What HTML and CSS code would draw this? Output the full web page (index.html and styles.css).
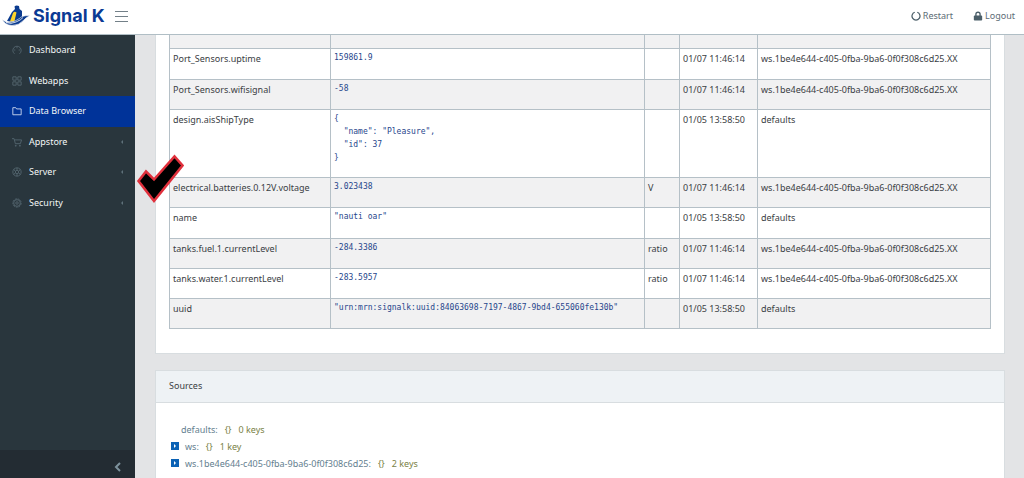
FILE: index.html
```html
<!DOCTYPE html>
<html lang="en">
<head>
<meta charset="utf-8">
<title>Signal K</title>
<link rel="stylesheet" href="styles.css">
</head>
<body>
<header class="topbar">
  <a class="brand" href="#">
    <svg class="brand-mark" viewBox="0 0 28 22" aria-hidden="true">
      <path d="M5 16 L10 7 L13 4 L12.500 1.500 Q14 0 17 1 L17.500 4 L20 6 L20 13 Q14 18 5 16Z" fill="#0b3b8f"/>
      <path d="M8 16.500 L11 8 Q12.500 6 14.500 7.500 L12.500 16Z" fill="#fdd32a"/>
      <path d="M0 14 Q5 19.500 13 16 Q18 13.500 20 11.500 Q23 10.500 28 10.500 Q24 12.500 22 15 Q17 20.500 10 20.500 Q3 20 0 14Z" fill="#0b3b8f" stroke="#fff" stroke-width="0.600"/>
      <path d="M4 17.500 Q9 19.500 14 17 Q19 15 21 12.500" fill="none" stroke="#fff" stroke-width="0.800"/>
    </svg>
    <span>Signal K</span>
  </a>
  <button class="menu-toggle" aria-label="Toggle menu"><i></i><i></i><i></i></button>
  <nav class="actions">
    <a href="#"><svg viewBox="0 0 12 12" aria-hidden="true"><path d="M4.500 1.500 A4.800 4.800 0 1 0 7.500 1.500" fill="none" stroke="currentColor" stroke-width="1.500"/></svg>Restart</a>
    <a href="#"><svg viewBox="0 0 12 12" aria-hidden="true"><path d="M3.500 6 V4 A2.500 2.500 0 0 1 8.500 4 V6" fill="none" stroke="currentColor" stroke-width="1.600"/><rect x="1" y="5.500" width="10" height="6" rx="1" fill="currentColor"/></svg>Logout</a>
  </nav>
</header>
<div class="shell">
  <aside class="sidebar">
    <nav class="menu">
      <a href="#"><svg viewBox="0 0 12 12"><path d="M3 10.500 A5 5 0 1 1 9 10.500 M6 2.500 V4 M2.500 6 H4 M8 6 H9.500"/></svg>Dashboard</a>
      <a href="#"><svg viewBox="0 0 12 12"><path d="M1 1h4v4H1z M7 1h4v4H7z M1 7h4v4H1z M7 7h4v4H7z"/></svg>Webapps</a>
      <a href="#" class="active"><svg viewBox="0 0 12 12"><path d="M1 2 H4.500 L5.500 3.500 H11 V10.500 H1Z"/></svg>Data Browser</a>
      <a href="#"><svg viewBox="0 0 12 12"><path d="M0 2 H2.500 L4 8 H10 L11.500 3.500 H3 M4 10h1v1H4z M9 10h1v1H9z"/></svg>Appstore<b class="chev"></b></a>
      <a href="#"><svg viewBox="0 0 12 12"><circle cx="6" cy="6" r="5"/><circle cx="6" cy="6" r="2"/><path d="M6 1V4M6 8V11M2 3L4 5M10 3L8 5M2 9L4 7M10 9L8 7"/></svg>Server<b class="chev"></b></a>
      <a href="#"><svg viewBox="0 0 12 12"><circle cx="6" cy="6" r="5" stroke-dasharray="2.400 1"/><circle cx="6" cy="6" r="4"/><circle cx="6" cy="6" r="1.500"/></svg>Security<b class="chev"></b></a>
    </nav>
    <button class="minimizer" aria-label="Collapse sidebar"><svg viewBox="0 0 8 10"><path d="M6 1 L2 5 L6 9"/></svg></button>
  </aside>
  <main class="content">
    <section class="card data">
      <table>
        <colgroup><col class="c-path"><col class="c-value"><col class="c-unit"><col class="c-time"><col></colgroup>
        <tbody>
          <tr class="cut"><td></td><td></td><td></td><td></td><td></td></tr>
          <tr><td>Port_Sensors.uptime</td><td><pre>159861.9</pre></td><td></td><td>01/07 11:46:14</td><td>ws.1be4e644-c405-0fba-9ba6-0f0f308c6d25.XX</td></tr>
          <tr><td>Port_Sensors.wifisignal</td><td><pre>-58</pre></td><td></td><td>01/07 11:46:14</td><td>ws.1be4e644-c405-0fba-9ba6-0f0f308c6d25.XX</td></tr>
          <tr><td>design.aisShipType</td><td><pre>{
  "name": "Pleasure",
  "id": 37
}</pre></td><td></td><td>01/05 13:58:50</td><td>defaults</td></tr>
          <tr><td>electrical.batteries.0.12V.voltage</td><td><pre>3.023438</pre></td><td>V</td><td>01/07 11:46:14</td><td>ws.1be4e644-c405-0fba-9ba6-0f0f308c6d25.XX</td></tr>
          <tr><td>name</td><td><pre>"nauti oar"</pre></td><td></td><td>01/05 13:58:50</td><td>defaults</td></tr>
          <tr><td>tanks.fuel.1.currentLevel</td><td><pre>-284.3386</pre></td><td>ratio</td><td>01/07 11:46:14</td><td>ws.1be4e644-c405-0fba-9ba6-0f0f308c6d25.XX</td></tr>
          <tr><td>tanks.water.1.currentLevel</td><td><pre>-283.5957</pre></td><td>ratio</td><td>01/07 11:46:14</td><td>ws.1be4e644-c405-0fba-9ba6-0f0f308c6d25.XX</td></tr>
          <tr><td>uuid</td><td><pre>"urn:mrn:signalk:uuid:84063698-7197-4867-9bd4-655060fe130b"</pre></td><td></td><td>01/05 13:58:50</td><td>defaults</td></tr>
        </tbody>
      </table>
    </section>
    <section class="card">
      <h2>Sources</h2>
      <ul class="tree">
        <li class="leaf"><span>defaults:</span><em>{}</em><em>0 keys</em></li>
        <li><button aria-label="Expand ws"></button><span>ws:</span><em>{}</em><em>1 key</em></li>
        <li><button aria-label="Expand ws.1be4e644"></button><span>ws.1be4e644-c405-0fba-9ba6-0f0f308c6d25:</span><em>{}</em><em>2 keys</em></li>
      </ul>
    </section>
  </main>
</div>
<svg class="checkmark" viewBox="0 0 48 52" aria-hidden="true"><path d="M2.500 28 L10 18.500 L18 26.500 L38.500 3.500 L46.500 12.500 L18 48Z" fill="#000" stroke="#e0303c" stroke-width="2.500"/></svg>
</body>
</html>
```
FILE: styles.css
```css
* { box-sizing: border-box; }
body {
  margin: 0;
  height: 100vh;
  overflow: hidden;
  display: flex;
  flex-direction: column;
  background: #e3e4e6;
  color: #3a4044;
  font: 9px/16px "Noto Sans", sans-serif;
}
a { color: inherit; text-decoration: none; }
button { padding: 0; border: 0; background: none; }

.topbar {
  flex: none;
  height: 35px;
  padding: 0 9px 2px 2px;
  display: flex;
  align-items: center;
  background: #fff;
  border-bottom: 1px solid #b0bec5;
}
.brand {
  display: flex;
  align-items: center;
  gap: 3px;
  color: #0a3a94;
  font: 700 18px/24px Inter, sans-serif;
}
.brand-mark { width: 28px; height: 22px; }
.menu-toggle {
  margin-left: 10px;
  width: 13px;
  display: grid;
  gap: 4px;
}
.menu-toggle i { height: 1px; background: #738088; }
.actions {
  margin-left: auto;
  display: flex;
  gap: 20px;
  color: #5c6c75;
}
.actions a { display: flex; align-items: center; gap: 2px; }
.actions svg { width: 10px; height: 10px; color: #4b5f69; }

.shell { flex: 1; min-height: 0; display: flex; }
.sidebar {
  flex: none;
  width: 135px;
  display: flex;
  flex-direction: column;
  justify-content: space-between;
  background: #29363d;
  color: #f4f6f7;
}
.menu { height: 183px; display: grid; grid-auto-rows: 1fr; }
.menu a {
  padding: 0 12px;
  display: flex;
  align-items: center;
  gap: 7px;
}
.menu svg {
  width: 10px;
  height: 10px;
  fill: none;
  stroke: #586a73;
}
.menu .active { background: #003399; }
.menu .active svg { stroke: #dbe4f5; }
.chev {
  margin-left: auto;
  border: 2px solid transparent;
  border-left: 0;
  border-right-color: #5f717a;
}
.minimizer {
  height: 28px;
  padding: 7px 13px 0 0;
  background: #232c33;
  text-align: right;
}
.minimizer svg {
  width: 8px;
  height: 10px;
  fill: none;
  stroke: #7d929d;
  stroke-width: 2;
}

.content { flex: 1; min-width: 0; padding: 0 19px 0 20px; }
.card {
  margin-bottom: 16px;
  background: #fff;
  border: 1px solid #d8dde0;
}
.data { padding: 0 13px 24px; border-top: 0; }
table {
  width: 100%;
  table-layout: fixed;
  border-collapse: collapse;
}
.c-path { width: 161px; }
.c-value { width: 314px; }
.c-unit { width: 35px; }
.c-time { width: 78px; }
td {
  height: 30px;
  padding: 2px 3px 0;
  vertical-align: top;
  border: 1px solid #b5c0c7;
  white-space: nowrap;
}
tr:nth-child(odd) { background: #f1f1f2; }
tr:nth-child(even) { background: #fff; }
tr:nth-child(4n+2) td { height: 31px; }
.cut td { height: 13px; padding: 0; border-top: 0; }
pre {
  margin: 0 0 13px;
  color: #27468c;
  font: 8px/13px "DejaVu Sans Mono", monospace;
}
h2 {
  margin: 0;
  padding: 7px 13px 8px;
  background: #eef2f5;
  border-bottom: 1px solid #d8dde0;
  font: inherit;
}
.tree {
  margin: 0;
  padding: 18px 15px;
  list-style: none;
  color: #64808f;
}
.tree li { display: flex; align-items: center; line-height: 17px; }
.tree .leaf { padding-left: 10px; }
.tree button {
  width: 8px;
  height: 8px;
  margin-right: 6px;
  display: grid;
  place-items: center;
  background: #0b62b5;
}
.tree button::before {
  content: "";
  border: 2px solid transparent;
  border-right: 0;
  border-left-color: #fff;
}
.tree em { margin-left: 7px; color: #7a8246; font-style: normal; }

.checkmark {
  position: absolute;
  left: 136px;
  top: 153px;
  width: 48px;
  height: 52px;
}
```
